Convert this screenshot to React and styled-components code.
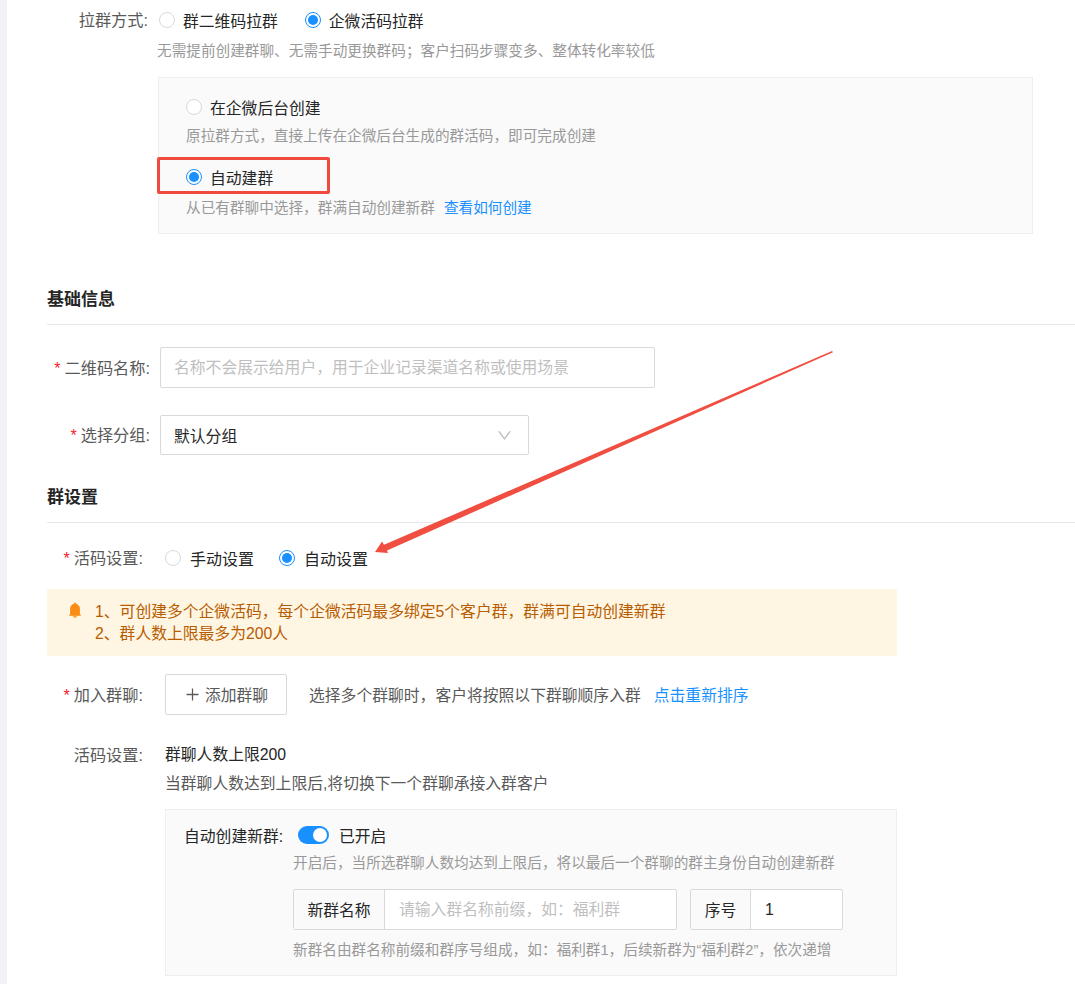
import React from 'react';
import styled, { createGlobalStyle } from 'styled-components';
import { AiFillBell, AiOutlineDown, AiOutlinePlus } from 'react-icons/ai';

const GlobalStyle = createGlobalStyle`
  html, body {
    margin: 0;
    padding: 0;
    background: #fff;
  }
  body {
    font-family: "Liberation Sans", "Noto Sans CJK SC", sans-serif;
    font-size: 15.8px;
    color: #262626;
  }
  * { box-sizing: border-box; }
`;

const Page = styled.div`
  position: relative;
  width: 1075px;
  height: 984px;
  overflow: hidden;
  padding-left: 47px;
  border-left: 7px solid #f0f2f5;
`;

const Content = styled.div`
  margin-left: -7px;
`;

const Row = styled.div`
  display: flex;
  align-items: ${p => p.$align || 'center'};
  height: ${p => p.$h || 40}px;
  margin-top: ${p => p.$top || 0}px;
`;

const Label = styled.div`
  width: ${p => p.$w}px;
  flex: none;
  text-align: right;
  color: #595959;
  font-size: 16.2px;
  line-height: 20px;
  white-space: nowrap;
  em {
    color: #f5222d;
    font-style: normal;
    margin-right: 4px;
  }
`;

const RadioGroup = styled.div`
  display: flex;
  align-items: center;
  gap: ${p => p.$gap || 27}px;
  margin-left: ${p => p.$left || 0}px;
`;

const RadioItem = styled.div`
  display: flex;
  align-items: center;
  gap: ${p => p.$gap || 8}px;
  height: ${p => p.$h || 'auto'};
  margin-top: ${p => p.$top || 0}px;
  font-size: ${p => p.$size || 15.8}px;
  color: #262626;
  white-space: nowrap;
`;

const RadioDot = styled.span`
  width: 16px;
  height: 16px;
  flex: none;
  border-radius: 50%;
  border: 1px solid ${p => (p.$on ? '#1890ff' : '#d9d9d9')};
  background: #fff;
  display: flex;
  align-items: center;
  justify-content: center;
  &::after {
    content: '';
    display: ${p => (p.$on ? 'block' : 'none')};
    width: 10px;
    height: 10px;
    border-radius: 50%;
    background: #1890ff;
  }
`;

const Hint = styled.div`
  color: #999;
  font-size: 14.65px;
  line-height: 20px;
  margin-left: ${p => p.$left || 0}px;
  margin-top: ${p => p.$top || 0}px;
  white-space: nowrap;
`;

const Link = styled.span`
  color: #1890ff;
  margin-left: ${p => p.$left || 0}px;
`;

const OptionPanel = styled.div`
  width: 875px;
  height: 157px;
  margin: 16px 0 0 111px;
  padding: 14px 27px 0;
  background: #fafafa;
  border: 1px solid #eee;
`;

const SectionTitle = styled.div`
  height: ${p => p.$h}px;
  padding-bottom: 14px;
  display: flex;
  align-items: flex-end;
  font-size: 17px;
  font-weight: 700;
  color: #262626;
  border-bottom: 1px solid #e8e8e8;
  margin-right: -47px;
`;

const TextField = styled.input`
  display: block;
  width: ${p => p.$w}px;
  height: 41px;
  margin-left: 10px;
  padding: 0 13px;
  font: inherit;
  color: #262626;
  background: #fff;
  border: 1px solid #d9d9d9;
  border-radius: 2px;
  outline: none;
  &::placeholder { color: #bfbfbf; }
`;

const SelectBox = styled.div`
  width: 369px;
  height: 40px;
  margin-left: 10px;
  padding: 0 15px 0 13px;
  display: flex;
  align-items: center;
  justify-content: space-between;
  color: #262626;
  border: 1px solid #d9d9d9;
  border-radius: 2px;
  svg { color: #bfbfbf; }
`;

const Notice = styled.div`
  width: 850px;
  height: 67px;
  margin-top: 11px;
  padding: 12px 0 0 19px;
  display: flex;
  gap: 11px;
  background: #fff5e3;
  border-radius: 2px;
  color: #b85c00;
  line-height: 22px;
  svg {
    color: #fa8c16;
    flex: none;
  }
`;

const AddButton = styled.div`
  width: 122px;
  height: 41px;
  margin-left: 22px;
  display: flex;
  align-items: center;
  justify-content: center;
  gap: 4px;
  color: #595959;
  border: 1px solid #d9d9d9;
  border-radius: 2px;
  flex: none;
`;

const RowNote = styled.div`
  margin-left: 22px;
  color: #595959;
  white-space: nowrap;
`;

const SettingBody = styled.div`
  margin-left: 22px;
`;

const PlainLine = styled.div`
  color: ${p => p.$color || '#262626'};
  line-height: 20px;
  margin-top: ${p => p.$top || 0}px;
  white-space: nowrap;
`;

const AutoPanel = styled.div`
  width: 732px;
  height: 167px;
  margin: 44px 0 0 118px;
  padding: 15px 18px 0;
  background: #fafafa;
  border: 1px solid #eee;
`;

const ToggleRow = styled.div`
  display: flex;
  align-items: center;
  height: 20px;
  color: #262626;
  white-space: nowrap;
`;

const ToggleLabel = styled.span`
  width: 100px;
  flex: none;
`;

const Toggle = styled.span`
  width: 31px;
  height: 18px;
  border-radius: 9px;
  background: #1890ff;
  display: flex;
  align-items: center;
  justify-content: flex-end;
  padding-right: 2px;
  margin: 0 10px 0 14px;
  &::after {
    content: '';
    width: 14px;
    height: 14px;
    border-radius: 50%;
    background: #fff;
  }
`;

const InputRow = styled.div`
  display: flex;
  gap: 13px;
  margin: 16px 0 0 109px;
`;

const InputGroup = styled.div`
  display: flex;
  height: 41px;
  width: ${p => p.$w}px;
  border: 1px solid #d9d9d9;
  border-radius: 2px;
  background: #fff;
`;

const Addon = styled.div`
  width: ${p => p.$w}px;
  flex: none;
  display: flex;
  align-items: center;
  justify-content: center;
  background: #fafafa;
  border-right: 1px solid #d9d9d9;
  color: #262626;
`;

const GroupInput = styled.input`
  flex: 1;
  min-width: 0;
  border: none;
  outline: none;
  padding: 0 14px;
  font: inherit;
  color: #262626;
  background: transparent;
  &::placeholder { color: #bfbfbf; }
`;

const Highlight = styled.div`
  position: absolute;
  left: 150px;
  top: 157px;
  width: 173px;
  height: 37px;
  border: 3px solid #f04a3e;
  border-radius: 2px;
`;

const ArrowOverlay = styled.svg`
  position: absolute;
  left: -7px;
  top: 0;
  pointer-events: none;
`;

const App = () => (
  <Page>
    <GlobalStyle />
    <Content>
      <Row>
        <Label $w={101}>拉群方式:</Label>
        <RadioGroup $left={11}>
          <RadioItem><RadioDot />群二维码拉群</RadioItem>
          <RadioItem><RadioDot $on />企微活码拉群</RadioItem>
        </RadioGroup>
      </Row>
      <Hint $left={110} $top={1}>无需提前创建群聊、无需手动更换群码；客户扫码步骤变多、整体转化率较低</Hint>

      <OptionPanel>
        <RadioItem $h="30px"><RadioDot />在企微后台创建</RadioItem>
        <Hint $top={4}>原拉群方式，直接上传在企微后台生成的群活码，即可完成创建</Hint>
        <RadioItem $h="30px" $top={16}><RadioDot $on />自动建群</RadioItem>
        <Hint $top={6}>从已有群聊中选择，群满自动创建新群<Link $left={9}>查看如何创建</Link></Hint>
      </OptionPanel>

      <SectionTitle $h={91}>基础信息</SectionTitle>
      <Row $h={41} $top={22}>
        <Label $w={103}><em>*</em>二维码名称:</Label>
        <TextField $w={495} placeholder="名称不会展示给用户，用于企业记录渠道名称或使用场景" readOnly />
      </Row>
      <Row $h={40} $top={27}>
        <Label $w={103}><em>*</em>选择分组:</Label>
        <SelectBox>默认分组<AiOutlineDown size={17} /></SelectBox>
      </Row>

      <SectionTitle $h={68}>群设置</SectionTitle>
      <Row $h={40} $top={15}>
        <Label $w={96}><em>*</em>活码设置:</Label>
        <RadioGroup $left={22} $gap={25}>
          <RadioItem $size={16} $gap={9}><RadioDot />手动设置</RadioItem>
          <RadioItem $size={16} $gap={9}><RadioDot $on />自动设置</RadioItem>
        </RadioGroup>
      </Row>

      <Notice>
        <AiFillBell size={18} />
        <div>
          1、可创建多个企微活码，每个企微活码最多绑定5个客户群，群满可自动创建新群
          <br />
          2、群人数上限最多为200人
        </div>
      </Notice>

      <Row $h={41} $top={18}>
        <Label $w={96}><em>*</em>加入群聊:</Label>
        <AddButton><AiOutlinePlus size={17} />添加群聊</AddButton>
        <RowNote>选择多个群聊时，客户将按照以下群聊顺序入群<Link $left={13}>点击重新排序</Link></RowNote>
      </Row>

      <Row $h={20} $top={30} $align="flex-start">
        <Label $w={96}>活码设置:</Label>
        <SettingBody>
          <PlainLine>群聊人数上限200</PlainLine>
          <PlainLine $top={9} $color="#595959">当群聊人数达到上限后,将切换下一个群聊承接入群客户</PlainLine>
        </SettingBody>
      </Row>

      <AutoPanel>
        <ToggleRow>
          <ToggleLabel>自动创建新群:</ToggleLabel>
          <Toggle />
          已开启
        </ToggleRow>
        <Hint $left={109} $top={8}>开启后，当所选群聊人数均达到上限后，将以最后一个群聊的群主身份自动创建新群</Hint>
        <InputRow>
          <InputGroup $w={384}>
            <Addon $w={91}>新群名称</Addon>
            <GroupInput placeholder="请输入群名称前缀，如：福利群" readOnly />
          </InputGroup>
          <InputGroup $w={153}>
            <Addon $w={60}>序号</Addon>
            <GroupInput value="1" readOnly />
          </InputGroup>
        </InputRow>
        <Hint $left={109} $top={10}>新群名由群名称前缀和群序号组成，如：福利群1，后续新群为“福利群2”，依次递增</Hint>
      </AutoPanel>
    </Content>

    <Highlight />
    <ArrowOverlay width="1075" height="984" viewBox="0 0 1075 984">
      <polygon points="833,352.2 387,550.5 388,553 375,552 382,541.5 384,544.8 832,351" fill="#f04e40" />
    </ArrowOverlay>
  </Page>
);

export default App;
